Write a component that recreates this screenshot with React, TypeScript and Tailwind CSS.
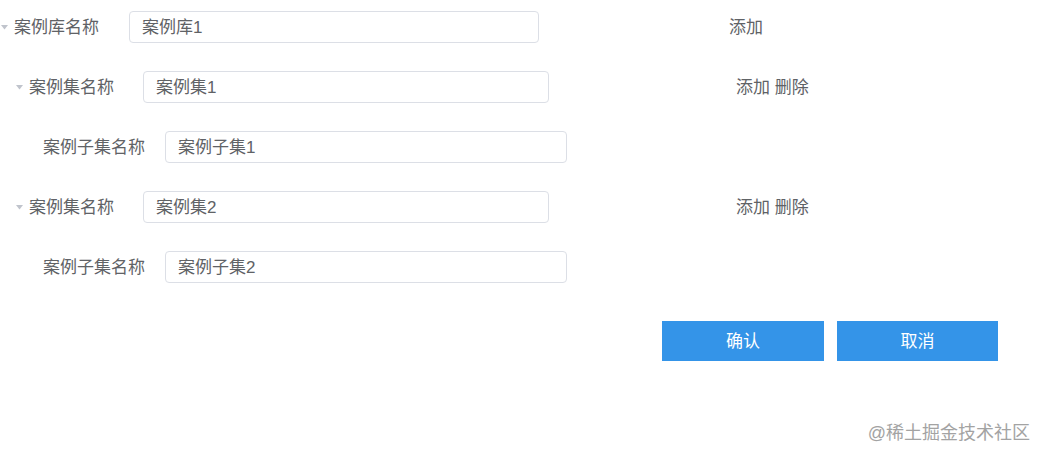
import React from "react";

const font = { fontFamily: '"Liberation Sans", "Noto Sans CJK SC", sans-serif' };

function Caret() {
  return (
    <span className="flex w-[14px] shrink-0 items-center justify-start pl-[1px] pt-[1px]">
      <svg width="7" height="5" viewBox="0 0 7 5">
        <path d="M0 0 L7 0 L3.5 4.5 Z" fill="#c0c4cc" />
      </svg>
    </span>
  );
}

function Input({ value, w }: { value: string; w: string }) {
  return (
    <div
      className={`flex h-[32px] ${w} shrink-0 items-center rounded-[4px] border border-[#dcdfe6] bg-white pl-[12px] pt-[1px] text-[17px] text-[#606266]`}
    >
      {value}
    </div>
  );
}

export default function App() {
  return (
    <div className="relative h-[460px] w-[1046px] bg-white text-[#606266]" style={font}>
      <div className="flex flex-col gap-[28px] pt-[11px]">
        {/* Row 1 */}
        <div className="flex h-[32px] items-center">
          <Caret />
          <span className="w-[115px] shrink-0 pt-[1px] text-[17px]">案例库名称</span>
          <Input value="案例库1" w="w-[410px]" />
          <span className="ml-[190px] pt-[1px] text-[17px]">添加</span>
        </div>
        {/* Row 2 */}
        <div className="flex h-[32px] items-center pl-[15px]">
          <Caret />
          <span className="w-[114px] shrink-0 pt-[1px] text-[17px]">案例集名称</span>
          <Input value="案例集1" w="w-[406px]" />
          <span className="ml-[187px] pt-[1px] text-[17px]">添加 删除</span>
        </div>
        {/* Row 3 */}
        <div className="flex h-[32px] items-center pl-[43px]">
          <span className="w-[122px] shrink-0 pt-[1px] text-[17px]">案例子集名称</span>
          <Input value="案例子集1" w="w-[402px]" />
        </div>
        {/* Row 4 */}
        <div className="flex h-[32px] items-center pl-[15px]">
          <Caret />
          <span className="w-[114px] shrink-0 pt-[1px] text-[17px]">案例集名称</span>
          <Input value="案例集2" w="w-[406px]" />
          <span className="ml-[187px] pt-[1px] text-[17px]">添加 删除</span>
        </div>
        {/* Row 5 */}
        <div className="flex h-[32px] items-center pl-[43px]">
          <span className="w-[122px] shrink-0 pt-[1px] text-[17px]">案例子集名称</span>
          <Input value="案例子集2" w="w-[402px]" />
        </div>
      </div>
      <div className="mt-[38px] flex gap-[13px] pl-[662px]">
        <button className="flex h-[40px] w-[162px] items-center justify-center bg-[#3494e8] pt-[1px] text-[17px] text-white">
          确认
        </button>
        <button className="flex h-[40px] w-[161px] items-center justify-center bg-[#3494e8] pt-[1px] text-[17px] text-white">
          取消
        </button>
      </div>
      <div className="absolute bottom-[13px] right-[16px] text-[18px] text-[#a3a3a3]">@稀土掘金技术社区</div>
    </div>
  );
}
